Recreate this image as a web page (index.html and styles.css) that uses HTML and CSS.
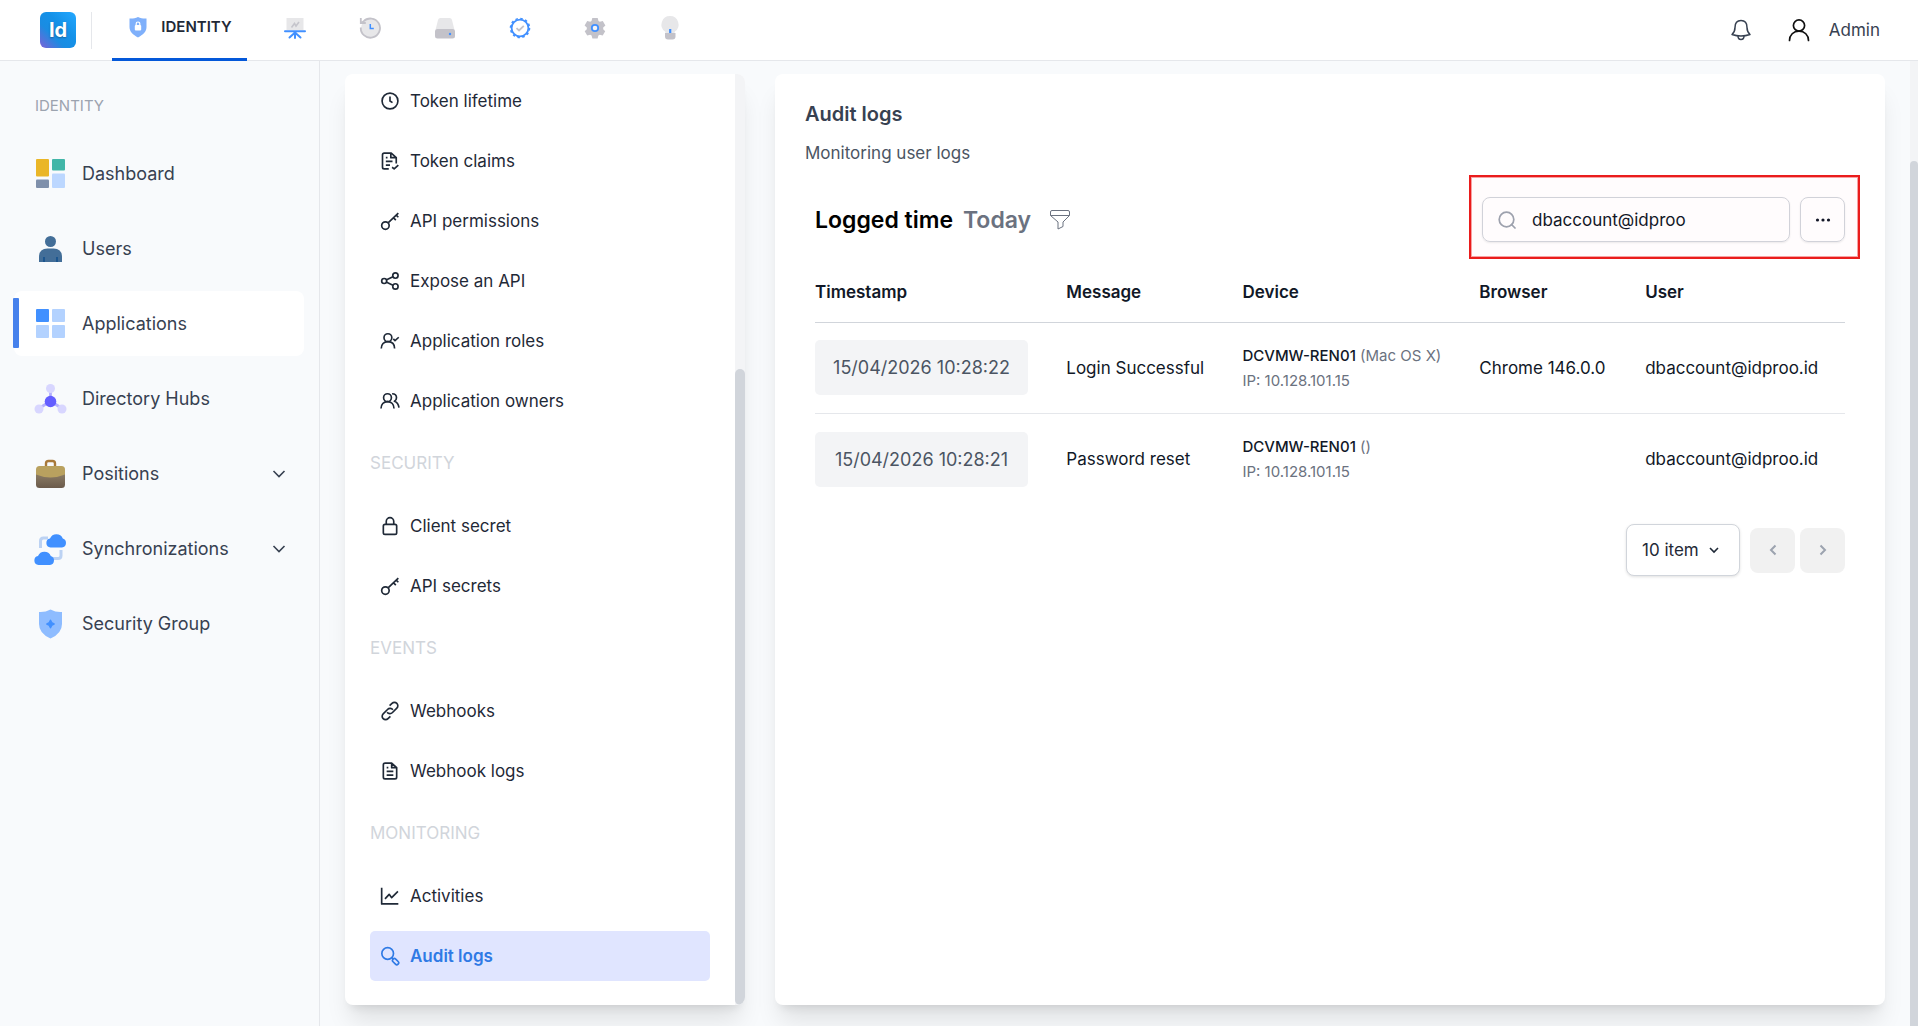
FILE: index.html
```html
<!DOCTYPE html>
<html lang="en">
<head>
  <meta charset="UTF-8">
  <meta name="viewport" content="width=device-width, initial-scale=1">
  <title>Audit logs - Identity</title>
  <link rel="stylesheet" href="styles.css">
</head>
<body>
  <header class="topbar">
    <a href="#" class="logo">Id</a>

    <nav class="modules">
      <a href="#" class="module active">
        <svg width="22" height="22" viewBox="0 0 22 22">
          <path d="M2.500 2.500c3 .4 5.500-.4 8.500-1.500 3 1.100 5.500 1.900 8.500 1.500v8.500c0 5-3.500 7.500-8.500 10.500C6 18.500 2.500 16 2.500 11z" fill="#7fb0fb"/>
          <rect x="7.800" y="9" width="6.400" height="5.500" rx="1" fill="#fff"/>
          <path d="M9.200 9V7.800a1.800 1.800 0 0 1 3.600 0V9" fill="none" stroke="#fff" stroke-width="1.200"/>
        </svg>
        <span>IDENTITY</span>
      </a>
      <a href="#" class="module" aria-label="Reports">
        <svg width="22" height="22" viewBox="0 0 22 22">
          <path d="M2.500 1h17v12h-17z" fill="#e7e7e9"/>
          <path d="M7.500 10.500l3-4 1.500 2.500 3-4" fill="none" stroke="#c5c5cc" stroke-width="1.600"/>
          <path d="M1 14.200h20M11 15v6M10.500 16l-5 4.500M11.500 16l5 4.500" fill="none" stroke="#4190ff" stroke-width="2" stroke-linecap="round"/>
        </svg>
      </a>
      <a href="#" class="module" aria-label="History">
        <svg width="22" height="22" viewBox="0 0 22 22">
          <circle cx="11.500" cy="11.500" r="9.500" fill="#e7e7e9"/>
          <path d="M1.800 10.500a9.600 9.600 0 1 0 2.600-6L1.800 6M1.800 1v5h5" fill="none" stroke="#c3c2c9" stroke-width="1.800"/>
          <path d="M11.300 7v4.500h3.500" fill="none" stroke="#4190ff" stroke-width="1.500"/>
        </svg>
      </a>
      <a href="#" class="module" aria-label="Storage">
        <svg width="22" height="22" viewBox="0 0 22 22">
          <path d="M4 3q.5-2 2.500-2h9q2 0 2.500 2l2.500 10h-19z" fill="#e7e7e9"/>
          <rect x="1" y="12" width="20" height="9.500" rx="2.500" fill="#c3c2c9"/>
          <circle cx="16" cy="17" r="1.200" fill="#4190ff"/>
        </svg>
      </a>
      <a href="#" class="module" aria-label="Verification">
        <svg width="22" height="22" viewBox="0 0 22 22">
          <circle cx="11" cy="11" r="8.400" fill="none" stroke="#4190ff" stroke-width="1.800"/>
          <circle cx="11" cy="11" r="9.500" fill="none" stroke="#4190ff" stroke-width="1.600" stroke-dasharray="2.500 2.474"/>
          <path d="M7.500 11.200l2.500 2.300 4.800-4.700" fill="none" stroke="#c3c2c9" stroke-width="1.800"/>
        </svg>
      </a>
      <a href="#" class="module" aria-label="Settings">
        <svg width="22" height="22" viewBox="0 0 22 22">
          <path d="M8.300 1h5.400l.8 3 1.300.8 3-.9 2.600 4.600-2.200 2.100v1.600l2 2-2.500 4.400-2.900-.8-1.400.8-.8 2.800H8.400l-.8-2.800-1.400-.8-3 .8L.7 14.200l2.100-2v-1.600L.6 8.500 3.200 4l3 .8L7.500 4z" fill="#c3c2c9"/>
          <circle cx="11" cy="11" r="3.200" fill="#f3f3f5" stroke="#4190ff" stroke-width="1.800"/>
        </svg>
      </a>
      <a href="#" class="module" aria-label="Help">
        <svg width="22" height="26" viewBox="0 0 22 26">
          <path d="M11 1a8.500 8.500 0 0 0-5 15.400L7 19h8l1-2.600A8.500 8.500 0 0 0 11 1z" fill="#e7e7e9"/>
          <path d="M6 18h10.500v3.500q0 3-3 3H9q-3 0-3-3z" fill="#c3c2c9"/>
          <path d="M11.200 14v4" stroke="#4190ff" stroke-width="2.200"/>
        </svg>
      </a>
    </nav>

    <div class="account">
      <button type="button" class="bell" aria-label="Notifications">
        <svg width="24" height="24" viewBox="0 0 24 24" fill="none" stroke="#374151" stroke-width="1.500" stroke-linejoin="round">
          <path d="M6 9.500C6 5.500 8 2.500 12 2.500s6 3 6 7c0 3.500.8 5 3 7-6 2-12 2-18 0 2.200-2 3-3.500 3-7z"/>
          <path d="M9 18c0 2.200 1.200 3.500 3 3.500s3-1.300 3-3.500"/>
        </svg>
      </button>
      <a href="#" class="user">
        <svg width="24" height="24" viewBox="0 0 24 24" fill="none" stroke="#111" stroke-width="1.700" stroke-linecap="round">
          <circle cx="12" cy="7.500" r="5.600"/>
          <path d="M2.500 22.500c0-5.500 4-9.400 9.500-9.400s9.500 3.900 9.500 9.400"/>
        </svg>
        <span>Admin</span>
      </a>
    </div>
  </header>

  <div class="layout">
    <aside class="sidebar">
      <h2>IDENTITY</h2>
      <nav class="side-nav">
        <a href="#">
          <svg width="34" height="34" viewBox="0 0 34 34">
            <rect x="3" y="2" width="13" height="17.500" rx="1" fill="#eab627"/>
            <rect x="19" y="2" width="13" height="11.500" rx="1" fill="#42b6a8"/>
            <rect x="3" y="22.500" width="13" height="8.500" rx="1" fill="#7f90ab"/>
            <rect x="19" y="16.500" width="13" height="14.500" rx="1" fill="#bcd7ff"/>
          </svg>
          <span>Dashboard</span>
        </a>
        <a href="#">
          <svg width="34" height="34" viewBox="0 0 34 34">
            <circle cx="17.500" cy="9.500" r="5.500" fill="#436e98"/>
            <path d="M6 30v-5q0-8.500 8.500-8.500h6q8.500 0 8.500 8.500v5z" fill="#436e98"/>
            <path d="M11 25v5M24 25v5" stroke="#1c568f" stroke-width="2"/>
          </svg>
          <span>Users</span>
        </a>
        <a href="#" class="active">
          <svg width="34" height="34" viewBox="0 0 34 34">
            <rect x="3" y="2" width="13" height="13" rx="1" fill="#4190ff"/>
            <rect x="19" y="2" width="13" height="13" rx="1" fill="#b3d2ff"/>
            <rect x="3" y="18" width="13" height="13" rx="1" fill="#b3d2ff"/>
            <rect x="19" y="18" width="13" height="13" rx="1" fill="#b3d2ff"/>
          </svg>
          <span>Applications</span>
        </a>
        <a href="#">
          <svg width="34" height="34" viewBox="0 0 34 34">
            <path d="M17.500 6v13L6 26.500M17.500 19L29 26.500" fill="none" stroke="#b5b1fd" stroke-width="2.800"/>
            <circle cx="17.500" cy="6.500" r="4.500" fill="#d8d6ff"/>
            <circle cx="6" cy="27" r="4.500" fill="#d8d6ff"/>
            <circle cx="29" cy="27" r="4.500" fill="#d8d6ff"/>
            <circle cx="17.500" cy="19.500" r="5.800" fill="#645eff"/>
          </svg>
          <span>Directory Hubs</span>
        </a>
        <a href="#">
          <svg width="34" height="34" viewBox="0 0 34 34">
            <defs>
              <linearGradient id="bag" x1="0" y1="0" x2="0" y2="1">
                <stop offset="0" stop-color="#8f8068"/>
                <stop offset="1" stop-color="#6b5a4b"/>
              </linearGradient>
            </defs>
            <path d="M13 9V6.500q0-2.500 2.500-2.500h4q2.500 0 2.500 2.500V9" fill="none" stroke="#a8793a" stroke-width="2.400"/>
            <path d="M3 15h29v12.500q0 3.500-3.500 3.500h-22Q3 31 3 27.500z" fill="url(#bag)"/>
            <path d="M3 12.500Q3 9 6.500 9h22q3.500 0 3.500 3.500v5q-14.500 6-29 0z" fill="#b9a15f"/>
          </svg>
          <span>Positions</span>
          <svg class="chevron" width="14" height="14" viewBox="0 0 14 14"><path d="M1.500 4l5.500 5.500L12.500 4"/></svg>
        </a>
        <a href="#">
          <svg width="34" height="34" viewBox="0 2 34 34">
            <path d="M7.500 18V11q0-3 3-3H15M28 20v5.500q0 3-3 3h-5" fill="none" stroke="#bcd2f3" stroke-width="3"/>
            <path d="M17.500 17.500a4.500 4.500 0 0 1-.5-8.900 7 7 0 0 1 12.800-.2 4.700 4.700 0 0 1-.8 9.100z" fill="#4190ff"/>
            <path d="M5.500 35a4.500 4.500 0 0 1-.5-8.900 7 7 0 0 1 12.800-.2A4.700 4.700 0 0 1 17 35z" fill="#4190ff"/>
          </svg>
          <span>Synchronizations</span>
          <svg class="chevron" width="14" height="14" viewBox="0 0 14 14"><path d="M1.500 4l5.500 5.500L12.500 4"/></svg>
        </a>
        <a href="#">
          <svg width="34" height="34" viewBox="0 0 34 34">
            <path d="M6 5q6 .5 11.500-2.500Q23 5.500 29 5v12q0 9.500-11.500 14.500Q6 26.500 6 17z" fill="#8ebcff"/>
            <path d="M17.500 13.500l1.100 2.400 2.400 1.100-2.400 1.100-1.100 2.400-1.100-2.400L14 17l2.400-1.100z" fill="#4190ff" stroke="#4190ff" stroke-width="1.800" stroke-linejoin="round"/>
          </svg>
          <span>Security Group</span>
        </a>
      </nav>
    </aside>

    <main class="content">
      <section class="card settings">
        <nav class="settings-nav">
          <a href="#">
            <svg viewBox="0 0 24 24"><circle cx="12" cy="12" r="9.500"/><path d="M12 6.500V12l3 2"/></svg>
            <span>Token lifetime</span>
          </a>
          <a href="#">
            <svg viewBox="0 0 24 24"><path d="M10.500 21.500H5q-2 0-2-2v-15q0-2 2-2h8.500L19.500 8v7M13 2.500V8h6.500M7 8h2M7 12.500h8M7 17h5M14.500 19.500l2.500 2 5-4.500"/></svg>
            <span>Token claims</span>
          </a>
          <a href="#">
            <svg viewBox="0 0 24 24"><circle cx="6.500" cy="17.500" r="4.500"/><path d="M10 14L22 2.500M16 8l3 3M19.500 5l2.500 2.500"/></svg>
            <span>API permissions</span>
          </a>
          <a href="#">
            <svg viewBox="0 0 24 24"><circle cx="5" cy="12" r="3"/><circle cx="18.500" cy="5.500" r="3.200"/><circle cx="18.500" cy="18.500" r="3.200"/><path d="M8 10.600l7.500-3.700M8 13.400l7.500 3.700"/></svg>
            <span>Expose an API</span>
          </a>
          <a href="#">
            <svg viewBox="0 0 24 24"><circle cx="9.500" cy="8" r="4.700"/><path d="M1.500 21c0-5 3-8.300 8-8.300s8 3.300 8 8.300M16 9.500l2 2 4.500-4"/></svg>
            <span>Application roles</span>
          </a>
          <a href="#">
            <svg viewBox="0 0 24 24"><circle cx="9" cy="8" r="4.700"/><path d="M1.200 21c0-5 3-8.300 7.800-8.300s7.800 3.300 7.800 8.300M14.500 3.300c3.500 0 5.300 2.200 5.300 4.700 0 2-1 3.500-2.500 4.300 3.200 1.200 5 4.200 5.500 7.700"/></svg>
            <span>Application owners</span>
          </a>

          <h3>SECURITY</h3>
          <a href="#">
            <svg viewBox="0 0 24 24"><rect x="4" y="10" width="16" height="12" rx="2"/><path d="M7.500 10V6.500a4.500 4.500 0 0 1 9 0V10"/></svg>
            <span>Client secret</span>
          </a>
          <a href="#">
            <svg viewBox="0 0 24 24"><circle cx="6.500" cy="17.500" r="4.500"/><path d="M10 14L22 2.500M16 8l3 3M19.500 5l2.500 2.500"/></svg>
            <span>API secrets</span>
          </a>

          <h3>EVENTS</h3>
          <a href="#">
            <svg viewBox="0 0 24 24"><path d="M8.500 13.500a4.300 4.300 0 0 0 6.500.3l5.200-5.200a4 4 0 0 0-5.800-5.800L11.500 5.600M15.500 10.500a4.300 4.300 0 0 0-6.500-.3l-5.200 5.200a4 4 0 0 0 5.800 5.800l2.900-2.800"/></svg>
            <span>Webhooks</span>
          </a>
          <a href="#">
            <svg viewBox="0 0 24 24"><path d="M6 2.500h8L20 8v11.500q0 2-2 2H6q-2 0-2-2v-15q0-2 2-2zM14 2.500V8h6M8 8h2M8 12.500h8M8 17h8"/></svg>
            <span>Webhook logs</span>
          </a>

          <h3>MONITORING</h3>
          <a href="#">
            <svg viewBox="0 0 24 24"><path d="M2 2v19.500h20M6 15.500l5-5.500 3 4L21.500 6.500"/></svg>
            <span>Activities</span>
          </a>
          <a href="#" class="active">
            <svg viewBox="0 0 24 24"><circle cx="9.200" cy="9" r="7"/><path d="M14.300 14l1.700 1.700"/><rect x="14.500" y="16.500" width="8.500" height="4.500" rx="2.200" transform="rotate(45 18.700 18.700)"/></svg>
            <span>Audit logs</span>
          </a>
        </nav>
        <div class="scroll-track"><div class="scroll-thumb"></div></div>
      </section>

      <section class="card logs">
        <h1>Audit logs</h1>
        <p class="subtitle">Monitoring user logs</p>

        <div class="logs-body">
          <div class="toolbar">
            <div class="logged-time">
              <span>Logged time</span>
              <span class="muted">Today</span>
              <button type="button" class="filter" aria-label="Filter">
                <svg width="22" height="22" viewBox="0 0 22 22" fill="none" stroke="#6b7280" stroke-linejoin="round">
                  <path d="M1.500 3q0-1.500 1.500-1.500h16q1.500 0 1.500 1.500v3.500L14 13v4.500l-5 2.500v-7L1.500 6.500zM1.500 6.500h19"/>
                </svg>
              </button>
            </div>
            <div class="search-tools">
              <div class="search">
                <svg width="18" height="18" viewBox="0 0 18 18" fill="none" stroke="#9ca3af" stroke-width="1.700" stroke-linecap="round">
                  <circle cx="8.500" cy="8.500" r="7.300"/>
                  <path d="M13.500 13.500L17 17"/>
                </svg>
                <input type="text" value="dbaccount@idproo" aria-label="Search logs">
              </div>
              <button type="button" class="more" aria-label="More options">
                <svg width="16" height="4" viewBox="0 0 16 4" fill="#111827"><circle cx="2.500" cy="2" r="1.600"/><circle cx="8" cy="2" r="1.600"/><circle cx="13.500" cy="2" r="1.600"/></svg>
              </button>
            </div>
          </div>

          <table>
            <colgroup>
              <col class="col-time">
              <col class="col-message">
              <col class="col-device">
              <col class="col-browser">
              <col>
            </colgroup>
            <thead>
              <tr>
                <th>Timestamp</th>
                <th>Message</th>
                <th>Device</th>
                <th>Browser</th>
                <th>User</th>
              </tr>
            </thead>
            <tbody>
              <tr>
                <td><span class="timestamp">15/04/2026 10:28:22</span></td>
                <td>Login Successful</td>
                <td class="device"><div><strong>DCVMW-REN01</strong> (Mac OS X)</div><div>IP: 10.128.101.15</div></td>
                <td>Chrome 146.0.0</td>
                <td>dbaccount@idproo.id</td>
              </tr>
              <tr>
                <td><span class="timestamp">15/04/2026 10:28:21</span></td>
                <td>Password reset</td>
                <td class="device"><div><strong>DCVMW-REN01</strong> ()</div><div>IP: 10.128.101.15</div></td>
                <td></td>
                <td>dbaccount@idproo.id</td>
              </tr>
            </tbody>
          </table>

          <div class="pager">
            <div class="page-size">
              <select aria-label="Items per page">
                <option>10 item</option>
                <option>25 item</option>
                <option>50 item</option>
              </select>
              <svg width="10" height="8" viewBox="0 0 10 8"><path d="M1 2l4 4 4-4"/></svg>
            </div>
            <button type="button" class="page-btn" aria-label="Previous page" disabled>
              <svg width="8" height="12" viewBox="0 0 8 12"><path d="M6.500 1.500L2 6l4.500 4.500"/></svg>
            </button>
            <button type="button" class="page-btn" aria-label="Next page" disabled>
              <svg width="8" height="12" viewBox="0 0 8 12"><path d="M1.500 1.500L6 6l-4.500 4.500"/></svg>
            </button>
          </div>
        </div>
      </section>
    </main>

    <div class="page-scroll"><div class="page-thumb"></div></div>
  </div>
</body>
</html>
```
FILE: styles.css
```css
* {
  box-sizing: border-box;
}

body {
  margin: 0;
  height: 100vh;
  display: flex;
  flex-direction: column;
  overflow: hidden;
  background: #f8fafc;
  color: #111827;
  font-family: Inter, "Liberation Sans", sans-serif;
  font-size: 17px;
  line-height: 28px;
}

h1, h2, h3, p {
  margin: 0;
}

a {
  color: inherit;
  text-decoration: none;
}

button {
  font: inherit;
  padding: 0;
  border: none;
  background: none;
  cursor: pointer;
}

svg {
  display: block;
  flex-shrink: 0;
}

/* top bar */
.topbar {
  display: flex;
  align-items: center;
  flex-shrink: 0;
  height: 61px;
  padding: 0 38px 0 40px;
  background: #fff;
  border-bottom: 1px solid #e5e7eb;
}

.logo {
  width: 36px;
  height: 36px;
  border-radius: 6px;
  background: linear-gradient(45deg, #7d62d6 0%, #1a8ce2 35%, #1491e8 60%, #24a8ff 100%);
  color: #fff;
  font-size: 20px;
  font-weight: 700;
  line-height: 36px;
  text-align: center;
  text-shadow: 0 1px 2px rgba(0, 0, 0, 0.3);
}

.modules {
  display: flex;
  align-items: center;
  margin-left: 15px;
  padding-left: 21px;
  background: linear-gradient(#e5e7eb, #e5e7eb) 0 12px / 1px 37px no-repeat;
}

.module {
  display: flex;
  align-items: center;
  justify-content: center;
  width: 75px;
  height: 61px;
  padding-bottom: 5px;
}

.module.active {
  width: 135px;
  gap: 12px;
  margin-right: 10px;
  padding-bottom: 3px;
  border-bottom: 3px solid #0458d9;
  color: #1f2937;
  font-size: 15px;
  font-weight: 600;
}

.account {
  display: flex;
  align-items: center;
  gap: 34px;
  margin-left: auto;
}

.user {
  display: flex;
  align-items: center;
  gap: 18px;
  color: #374151;
}

/* left navigation */
.layout {
  display: flex;
  flex: 1;
  min-height: 0;
}

.sidebar {
  flex-shrink: 0;
  width: 320px;
  padding: 31px 15px 0 14px;
  border-right: 1px solid #e5e7eb;
}

.sidebar h2 {
  padding: 0 21px;
  color: #9ca3af;
  font-size: 15px;
  font-weight: 400;
}

.side-nav {
  display: flex;
  flex-direction: column;
  gap: 10px;
  margin-top: 21px;
}

.side-nav a {
  position: relative;
  display: flex;
  align-items: center;
  gap: 15px;
  height: 65px;
  padding: 0 18px 0 19px;
  border-radius: 8px;
  color: #374151;
  font-size: 18px;
}

.side-nav a.active {
  background: #fff;
}

.side-nav a.active::before {
  content: "";
  position: absolute;
  left: -1px;
  top: 7px;
  width: 6px;
  height: 50px;
  border-radius: 1px;
  background: #4681ec;
}

.side-nav .chevron {
  margin-left: auto;
  fill: none;
  stroke: #374151;
  stroke-width: 1.6;
}

/* content cards */
.content {
  display: flex;
  flex: 1;
  gap: 30px;
  min-width: 0;
  padding: 13px 25px 21px;
}

.card {
  border-radius: 8px;
  background: #fff;
  box-shadow: 0 20px 25px -5px rgba(0, 0, 0, 0.1), 0 8px 10px -6px rgba(0, 0, 0, 0.1);
}

.settings {
  display: flex;
  flex-shrink: 0;
  width: 400px;
  overflow: hidden;
}

.settings-nav {
  display: flex;
  flex: 1;
  flex-direction: column;
  justify-content: flex-end;
  gap: 10px;
  padding: 0 25px 24px;
}

.settings-nav a {
  display: flex;
  align-items: center;
  flex-shrink: 0;
  gap: 10px;
  height: 50px;
  padding: 0 10px;
  border-radius: 5px;
  color: #1f2937;
}

.settings-nav svg {
  width: 20px;
  height: 20px;
  fill: none;
  stroke: currentColor;
  stroke-width: 2;
  stroke-linejoin: round;
}

.settings-nav h3 {
  flex-shrink: 0;
  color: #d1d5db;
  font-size: 17px;
  font-weight: 400;
  line-height: 55px;
}

.settings-nav a.active {
  background: #e0e5ff;
  color: #2f7ae5;
  font-weight: 600;
}

.scroll-track {
  display: flex;
  align-items: flex-end;
  width: 10px;
  background: #f3f4f6;
}

.scroll-thumb {
  width: 100%;
  height: 68.3%;
  border-radius: 5px;
  background: #d1d5db;
}

.page-scroll {
  width: 8px;
  padding-top: 100px;
  background: #f3f4f6;
}

.page-thumb {
  height: 100%;
  border-radius: 5px 5px 0 0;
  background: #d1d5db;
}

/* audit logs */
.logs {
  flex: 1;
  min-width: 0;
  padding: 24px 30px;
}

.logs h1 {
  color: #374151;
  font-size: 20px;
  font-weight: 600;
  line-height: 32px;
}

.subtitle {
  margin-top: 9px;
  color: #4b5563;
}

.logs-body {
  padding: 30px 10px 0;
}

.toolbar {
  display: flex;
  align-items: center;
  justify-content: space-between;
}

.logged-time {
  display: flex;
  align-items: center;
  gap: 10px;
  color: #000;
  font-size: 23px;
  font-weight: 600;
}

.logged-time .muted {
  color: #6b7280;
}

.filter {
  margin-left: 8px;
}

.search-tools {
  position: relative;
  display: flex;
  gap: 10px;
}

/* highlight frame around the search tools */
.search-tools::after {
  content: "";
  position: absolute;
  inset: -22px -15px -17px -13px;
  border: 2px solid #ea1c1c;
  background: rgba(255, 0, 80, 0.01);
  box-shadow: inset 0 0 0 1px rgba(234, 28, 28, 0.4);
  pointer-events: none;
}

.search {
  display: flex;
  align-items: center;
  gap: 16px;
  width: 308px;
  height: 45px;
  padding: 0 15px;
  border: 1px solid #d1d5db;
  border-radius: 8px;
  box-shadow: 0 1px 2px rgba(0, 0, 0, 0.08);
}

.search input {
  flex: 1;
  min-width: 0;
  padding: 0;
  border: none;
  outline: none;
  background: none;
  color: #111827;
  font: inherit;
}

.more {
  display: flex;
  align-items: center;
  justify-content: center;
  width: 45px;
  height: 45px;
  border: 1px solid #d1d5db;
  border-radius: 8px;
  box-shadow: 0 1px 2px rgba(0, 0, 0, 0.08);
}

table {
  width: 100%;
  margin-top: 20px;
  border-spacing: 0;
  table-layout: fixed;
}

.col-time { width: 24.4%; }
.col-message { width: 17.1%; }
.col-device { width: 23%; }
.col-browser { width: 16.1%; }

th {
  height: 61px;
  padding: 0;
  border-bottom: 1px solid #d1d5db;
  font-weight: 600;
  text-align: left;
}

td {
  height: 91px;
  padding: 0 0 1px;
  white-space: nowrap;
}

tbody tr:not(:last-child) td {
  border-bottom: 1px solid #e5e7eb;
}

.timestamp {
  display: block;
  width: 213px;
  border-radius: 5px;
  background: #f3f4f6;
  color: #4b5563;
  font-size: 18px;
  line-height: 55px;
  text-align: center;
}

.device {
  color: #6b7280;
  font-size: 15px;
  line-height: 25px;
}

.device strong {
  color: #111827;
  font-weight: 500;
}

.pager {
  display: flex;
  align-items: center;
  justify-content: flex-end;
  gap: 5px;
  margin-top: 19px;
}

.page-size {
  position: relative;
  margin-right: 5px;
}

.page-size select {
  width: 114px;
  height: 52px;
  padding: 0 15px;
  border: 1px solid #d1d5db;
  border-radius: 8px;
  box-shadow: 0 1px 3px rgba(0, 0, 0, 0.12);
  appearance: none;
  background: #fff;
  color: #1f2937;
  font: inherit;
}

.page-size svg {
  position: absolute;
  right: 21px;
  top: 22px;
  fill: none;
  stroke: #1f2937;
  stroke-width: 1.6;
  pointer-events: none;
}

.page-btn {
  display: flex;
  align-items: center;
  justify-content: center;
  width: 45px;
  height: 45px;
  border-radius: 8px;
  background: #f1f1f1;
}

.page-btn svg {
  fill: none;
  stroke: #9ca3af;
  stroke-width: 2;
}
```
